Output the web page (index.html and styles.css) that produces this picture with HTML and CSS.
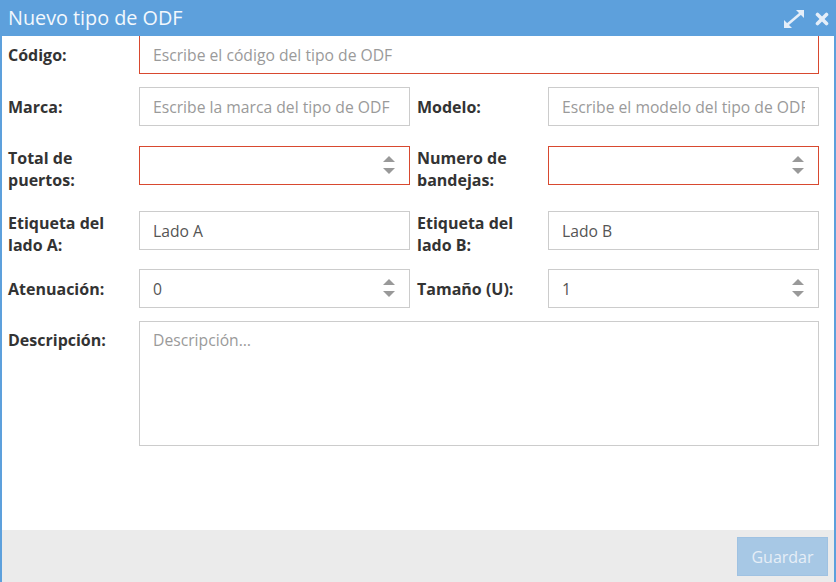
FILE: index.html
```html
<!DOCTYPE html>
<html lang="es">
<head>
<meta charset="utf-8">
<title>Nuevo tipo de ODF</title>
<link rel="stylesheet" href="styles.css">
</head>
<body>
<div class="win">
  <div class="hdr">
    <span class="title">Nuevo tipo de ODF</span>
    <div class="tools">
      <svg class="ico-exp" width="20" height="18" viewBox="0 0 20 18">
        <polygon points="20,0 20,8 12,0" fill="currentColor"/>
        <polygon points="0,18 0,10 8,18" fill="currentColor"/>
        <line x1="16.5" y1="3.5" x2="3.5" y2="14.5" stroke="currentColor" stroke-width="2.6"/>
      </svg>
      <svg class="ico-close" width="14" height="14" viewBox="0 0 14 14">
        <line x1="2.5" y1="2.5" x2="11.5" y2="11.5" stroke="currentColor" stroke-width="3.6" stroke-linecap="round"/>
        <line x1="11.5" y1="2.5" x2="2.5" y2="11.5" stroke="currentColor" stroke-width="3.6" stroke-linecap="round"/>
      </svg>
    </div>
  </div>
  <div class="body">
    <div class="row full first">
      <label class="lbl">Código:</label>
      <input class="inp inv" type="text" placeholder="Escribe el código del tipo de ODF">
    </div>
    <div class="row half spaced">
      <label class="lbl">Marca:</label>
      <input class="inp" type="text" placeholder="Escribe la marca del tipo de ODF">
      <label class="lbl l2">Modelo:</label>
      <input class="inp" type="text" placeholder="Escribe el modelo del tipo de ODF">
    </div>
    <div class="row half spaced tall">
      <label class="lbl two">Total de puertos:</label>
      <div class="spin"><input class="inp inv" type="text"><span class="arrows"><i class="up"></i><i class="dn"></i></span></div>
      <label class="lbl two l2">Numero de bandejas:</label>
      <div class="spin"><input class="inp inv" type="text"><span class="arrows"><i class="up"></i><i class="dn"></i></span></div>
    </div>
    <div class="row half tall">
      <label class="lbl two">Etiqueta del lado A:</label>
      <input class="inp" type="text" value="Lado A">
      <label class="lbl two l2">Etiqueta del lado B:</label>
      <input class="inp" type="text" value="Lado B">
    </div>
    <div class="row half">
      <label class="lbl">Atenuación:</label>
      <div class="spin"><input class="inp" type="text" value="0"><span class="arrows"><i class="up"></i><i class="dn"></i></span></div>
      <label class="lbl l2">Tamaño (U):</label>
      <div class="spin"><input class="inp" type="text" value="1"><span class="arrows"><i class="up"></i><i class="dn"></i></span></div>
    </div>
    <div class="row full">
      <label class="lbl top">Descripción:</label>
      <textarea class="inp area" placeholder="Descripción…"></textarea>
    </div>
  </div>
  <div class="ftr">
    <button class="btn" type="button">Guardar</button>
  </div>
</div>
</body>
</html>
```
FILE: styles.css
```css
* { box-sizing: border-box; }
html, body { margin: 0; padding: 0; }
body {
  font-family: "Open Sans", "Noto Sans", sans-serif;
  background: #fff;
  color: #333;
}
.win {
  width: 836px;
  height: 582px;
  display: flex;
  flex-direction: column;
  border-left: 2px solid #5da0dc;
  border-right: 2px solid #5da0dc;
  overflow: hidden;
}
.hdr {
  position: relative;
  z-index: 2;
  height: 36px;
  margin: 0 -2px;
  background: #5da0dc;
  display: flex;
  align-items: center;
  justify-content: space-between;
  padding: 0 7px 0 8px;
  flex: none;
}
.title {
  color: #f3f8fd;
  font-size: 19.8px;
  line-height: 36px;
}
.tools {
  display: flex;
  align-items: center;
  gap: 11px;
  color: #e4eef9;
}
.ico-exp { margin-top: 1px; }
.ico-close { margin-top: 2px; }
.body {
  flex: 1;
  padding: 0 15px 0 6px;
}
.row {
  display: grid;
  align-items: start;
  margin-bottom: 13px;
}
.row.first { margin-top: -1px; }
.row.spaced { margin-bottom: 20px; }
.row.tall { height: 45px; }
.row.full { grid-template-columns: 131px 1fr; }
.row.half { grid-template-columns: 131px 271px 138px 271px; }
.lbl {
  font-weight: bold;
  font-size: 16px;
  line-height: 22px;
  color: #333;
  padding-top: 9px;
}
.lbl.two { padding-top: 1px; }
.lbl.top { padding-top: 8px; }
.lbl.l2 { padding-left: 7px; }
.inp {
  display: block;
  width: 100%;
  height: 39px;
  border: 1px solid #cccccc;
  border-radius: 0;
  padding: 0 13px;
  font-family: "Open Sans", "Noto Sans", sans-serif;
  font-size: 15.7px;
  color: #555;
  background: #fff;
  outline: none;
}
.inp::placeholder { color: #9a9a9a; opacity: 1; }
.inp.inv { border-color: #d8492f; }
.area {
  height: 125px;
  padding: 7px 13px;
  resize: none;
  line-height: 22px;
}
.spin { position: relative; }
.arrows {
  position: absolute;
  right: 15px;
  top: 10px;
  display: flex;
  flex-direction: column;
  gap: 6px;
}
.arrows i {
  display: block;
  width: 0;
  height: 0;
  border-left: 6px solid transparent;
  border-right: 6px solid transparent;
}
.arrows .up { border-bottom: 6px solid #999; }
.arrows .dn { border-top: 6px solid #999; }
.ftr {
  flex: none;
  height: 52px;
  background: #ebebeb;
  display: flex;
  justify-content: flex-end;
  align-items: flex-start;
  padding: 7px 6px 0 0;
}
.btn {
  width: 91px;
  height: 39px;
  background: #a7c8e5;
  border: 1px solid #9fc2e2;
  color: #e6eef7;
  font-family: "Open Sans", "Noto Sans", sans-serif;
  font-size: 16px;
  padding: 0;
}
```
